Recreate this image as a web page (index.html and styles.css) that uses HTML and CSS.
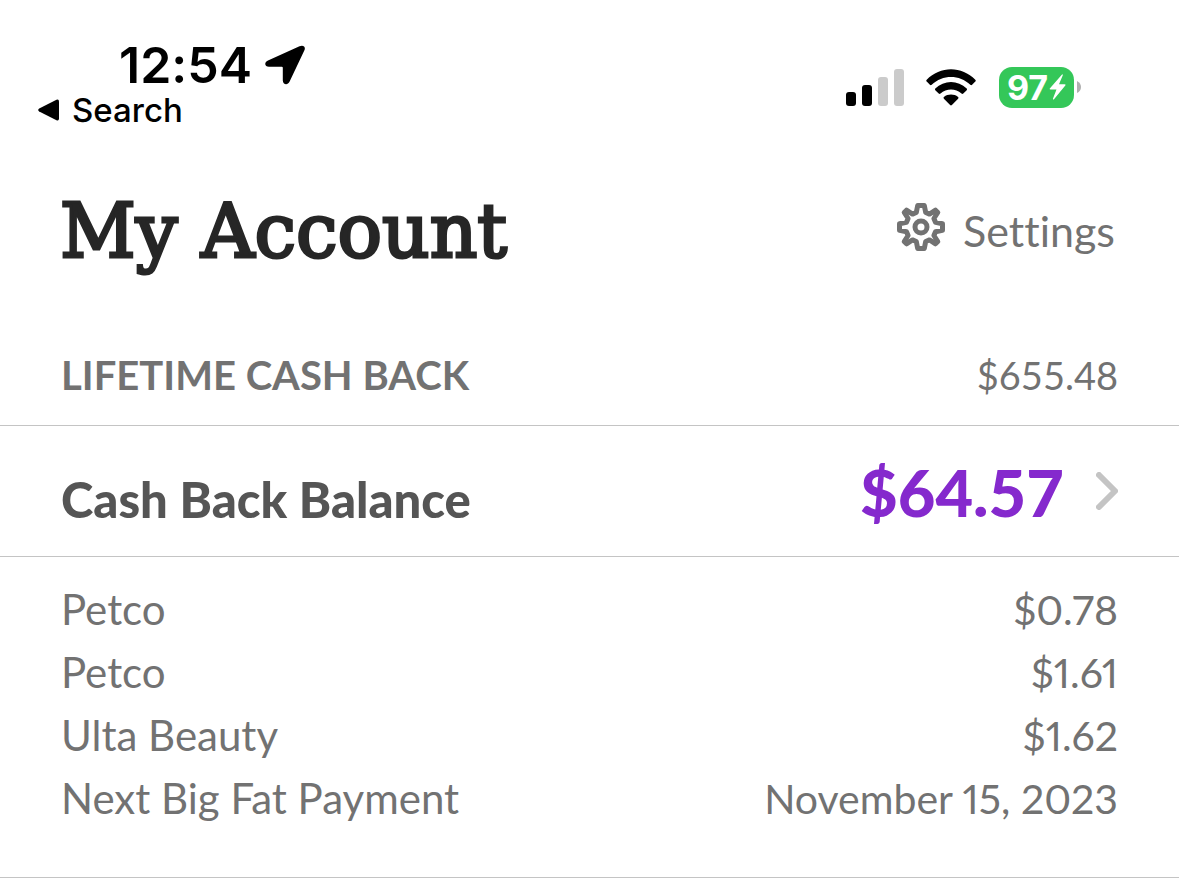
FILE: index.html
```html
<!DOCTYPE html>
<html lang="en">
<head>
  <meta charset="UTF-8">
  <meta name="viewport" content="width=device-width, initial-scale=1.0">
  <title>My Account</title>
  <link rel="stylesheet" href="styles.css">
</head>
<body>
  <!-- Status bar -->
  <div class="status-bar">
    <div class="status-left">
      <div class="clock">
        <span>12:54</span>
        <svg class="location" viewBox="0 0 40 40" aria-hidden="true">
          <path d="M3 15.500 34.500 1.200C38.500-.5 41 2 39.300 5.500L24.500 36.700C22.600 40.700 17.800 39.500 17.800 35.500V22.800Q17.800 21.800 16.800 21.800H4C-.6 21.800-1 17.300 3 15.500Z"/>
        </svg>
      </div>
      <a class="back" href="#">
        <svg class="back-arrow" viewBox="0 0 21 22" aria-hidden="true">
          <path d="M1.200 9.500 18.500.8Q21 0 21 2.500V19.500Q21 22 18.500 21.200L1.200 12.500Q-.8 11 1.200 9.500Z"/>
        </svg>
        <span>Search</span>
      </a>
    </div>
    <div class="status-right">
      <svg class="signal" viewBox="0 0 58 37" aria-hidden="true">
        <rect x="0" y="23" width="10" height="14" rx="3"/>
        <rect x="16" y="16" width="10" height="21" rx="3"/>
        <rect class="off" x="32" y="8" width="10" height="29" rx="3"/>
        <rect class="off" x="48" y="0" width="10" height="37" rx="3"/>
      </svg>
      <svg class="wifi" viewBox="0 0 50 37" aria-hidden="true">
        <path d="M.7 10.800C14-3.300 36-3.300 49.300 10.800Q50.200 11.700 49.300 12.600L46.100 15.800Q45.200 16.600 44.300 15.800C33.500 5.400 16.500 5.400 5.700 15.800Q4.800 16.600 3.900 15.800L.7 12.600Q-.2 11.700.7 10.800Z"/>
        <path d="M9.300 19.500C18 10.800 32 10.800 40.700 19.500Q41.500 20.400 40.700 21.200L37.300 24.500Q36.400 25.300 35.500 24.500C29.600 19.200 20.400 19.200 14.500 24.500Q13.600 25.300 12.700 24.500L9.300 21.200Q8.500 20.400 9.300 19.500Z"/>
        <path d="M17.900 28C22 24.800 28 24.800 32.100 28Q33 28.800 32.100 29.700L25.900 36.100Q25 37 24.100 36.100L17.900 29.700Q17 28.800 17.900 28Z"/>
      </svg>
      <div class="battery-wrap">
        <div class="battery">
          <span>97</span>
          <svg class="bolt" viewBox="0 0 17 26" aria-hidden="true">
            <path d="M13 .5 1 14.200Q0 15.500 1.500 15.500H7.500L4 24.500Q3.700 26.300 5 25.200L16.300 11.500Q17.200 10.200 15.500 10.200H10L13.800 1.200Q14 0 13 .5Z"/>
          </svg>
        </div>
        <svg class="battery-cap" viewBox="0 0 4 12" aria-hidden="true">
          <path d="M0 0Q4 2 4 6T0 12Z"/>
        </svg>
      </div>
    </div>
  </div>

  <!-- Page title -->
  <header class="header">
    <h1>My Account</h1>
    <a class="settings" href="#">
      <svg class="gear" viewBox="0 0 48 48" aria-hidden="true">
        <path d="M20.700 2.500H27.300L28.700 9.500L32.500 11.100L38.500 7.200L40.800 9.500L36.900 15.500L38.500 19.300L45.500 20.700V27.300L38.500 28.700L36.900 32.500L40.800 38.500L38.500 40.800L32.500 36.900L28.700 38.500L27.300 45.500H20.700L19.300 38.500L15.500 36.900L9.500 40.800L7.200 38.500L11.100 32.500L9.500 28.700L2.500 27.300V20.700L9.500 19.300L11.100 15.500L7.200 9.500L9.500 7.200L15.500 11.100L19.300 9.500Z"/>
        <circle cx="24" cy="24" r="6"/>
      </svg>
      <span>Settings</span>
    </a>
  </header>

  <main>
    <section class="row lifetime">
      <h2>LIFETIME CASH BACK</h2>
      <span class="lifetime-amount">$655.48</span>
    </section>

    <a class="row balance" href="#">
      <span class="balance-label">Cash Back Balance</span>
      <span class="balance-right">
        <span class="balance-amount">$64.57</span>
        <svg class="chevron" viewBox="0 0 22 38" aria-hidden="true">
          <path d="M3 3 19 19 3 35"/>
        </svg>
      </span>
    </a>

    <!-- Recent cash back -->
    <dl class="details">
      <div class="detail"><dt>Petco</dt><dd>$0.78</dd></div>
      <div class="detail"><dt>Petco</dt><dd>$1.61</dd></div>
      <div class="detail"><dt>Ulta Beauty</dt><dd>$1.62</dd></div>
      <div class="detail"><dt>Next Big Fat Payment</dt><dd>November 15, 2023</dd></div>
    </dl>
  </main>
</body>
</html>
```

FILE: styles.css
```css
* {
  box-sizing: border-box;
}

body {
  margin: 0;
  background: #fff;
  color: #727272;
  font-family: Lato, sans-serif;
  font-size: 42px;
  font-variant-ligatures: none;
}

a {
  color: inherit;
  text-decoration: none;
}

h1, h2, dl, dd {
  margin: 0;
}

svg {
  display: block;
  flex: none;
}

/* Status bar */
.status-bar {
  display: flex;
  justify-content: space-between;
  padding: 40px 98px 0 38px;
  color: #000;
  font-family: Inter, sans-serif;
}

.clock {
  display: flex;
  align-items: center;
  gap: 13px;
  padding-left: 81px;
  font-size: 50px;
  font-weight: 600;
  line-height: 50px;
}

.location {
  width: 40px;
  height: 40px;
}

.back {
  display: flex;
  align-items: center;
  gap: 13px;
  font-size: 33px;
  font-weight: 500;
  line-height: 40px;
}

.back-arrow {
  width: 21px;
  height: 22px;
}

.status-right {
  display: flex;
  align-items: center;
  height: 94px;
}

.signal {
  width: 58px;
  height: 37px;
}

.signal .off {
  fill: #cbcbcb;
}

.wifi {
  width: 50px;
  height: 37px;
  margin: 0 23px 0 22px;
}

.battery-wrap {
  display: flex;
  align-items: center;
  gap: 3px;
}

.battery {
  display: flex;
  align-items: center;
  justify-content: center;
  gap: 1px;
  width: 75px;
  height: 41px;
  border-radius: 13px;
  background: #34c759;
  color: #fff;
  font-size: 34px;
  font-weight: 700;
}

.bolt {
  width: 17px;
  height: 26px;
  fill: #fff;
}

.battery-cap {
  width: 4px;
  height: 12px;
  fill: #b0b0b0;
}

/* Page title */
.header {
  display: flex;
  align-items: center;
  justify-content: space-between;
  padding: 44px 64px 0 60px;
}

h1 {
  padding-top: 2px;
  color: #262626;
  font-family: "DejaVu Serif", serif;
  font-size: 74px;
  font-weight: 400;
  line-height: 102px;
  -webkit-text-stroke: 3px #262626;
}

.settings {
  display: flex;
  align-items: center;
  gap: 18px;
  font-size: 43px;
}

.gear {
  width: 48px;
  height: 48px;
  margin-bottom: 7px;
  fill: none;
  stroke: #727272;
  stroke-width: 5;
  stroke-linejoin: round;
}

/* Rows */
.row {
  display: flex;
  align-items: center;
  justify-content: space-between;
  padding: 0 61px;
  border-bottom: 1px solid #c4c4c4;
}

.lifetime {
  height: 144px;
  padding-top: 42px;
}

h2 {
  font-size: 40px;
  font-weight: 700;
}

.lifetime-amount {
  font-size: 38px;
}

.balance {
  height: 131px;
}

.balance-label {
  padding-top: 16px;
  color: #555;
  font-size: 49px;
  font-weight: 900;
}

.balance-right {
  display: flex;
  align-items: center;
  gap: 32px;
}

.balance-amount {
  padding-top: 2px;
  color: #8529cd;
  font-size: 65px;
  font-weight: 900;
}

.chevron {
  width: 22px;
  height: 38px;
  fill: none;
  stroke: #c4c4c4;
  stroke-width: 6;
  stroke-linecap: round;
  stroke-linejoin: round;
}

.details {
  padding: 21px 61px 47px;
  border-bottom: 1px solid #c4c4c4;
}

.detail {
  display: flex;
  justify-content: space-between;
  line-height: 63px;
}

dd {
  font-size: 41px;
  font-variant-numeric: proportional-nums;
}
```
